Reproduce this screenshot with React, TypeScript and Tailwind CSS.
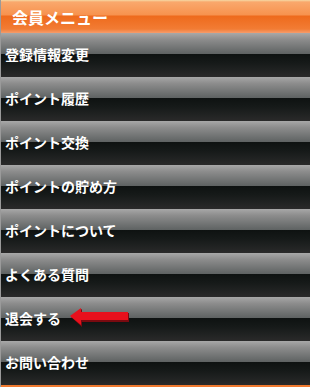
import React from "react";

const ITEMS: string[] = [
  "登録情報変更",
  "ポイント履歴",
  "ポイント交換",
  "ポイントの貯め方",
  "ポイントについて",
  "よくある質問",
  "退会する",
  "お問い合わせ",
];

function Arrow() {
  return (
    <svg width="60" height="20" viewBox="0 0 60 20" className="ml-[9px] shrink-0">
      {/* shadow */}
      <polygon points="1,9 12,1 12,5 59,5 59,14 12,14 12,19" fill="#7a0a10" />
      <polygon points="0,8 11,0 11,4 58,4 58,12 11,12 11,17" fill="#e8101c" />
    </svg>
  );
}

export default function App() {
  return (
    <div
      className="w-[310px] h-[387px] border-l border-[#9a9a9a] bg-[#222]"
      style={{ fontFamily: '"Noto Sans CJK JP", "Noto Sans", sans-serif' }}
    >
      <div className="h-[33px] flex items-center pl-[11px] bg-[linear-gradient(to_bottom,#f6d9a4_0px,#f9a86c_2px,#f7924e_15px,#ee6a1c_16px,#f27c34_29px,#f59c6c_33px)]">
        <span className="text-white font-bold text-[16px] leading-none">会員メニュー</span>
      </div>
      {ITEMS.map((item) => (
        <div
          key={item}
          className="h-[44px] flex items-center pl-[4px] pb-[2px] bg-[linear-gradient(to_bottom,#a8a8a8_0px,#8e8e8e_6px,#5e6262_21px,#0e1211_21px,#161a19_30px,#2a2a2a_44px)]"
        >
          <span className="text-white font-bold text-[14px] leading-none">{item}</span>
          {item === "退会する" && <Arrow />}
        </div>
      ))}
      <div className="h-[2px] bg-[#f07a30]" />
    </div>
  );
}
